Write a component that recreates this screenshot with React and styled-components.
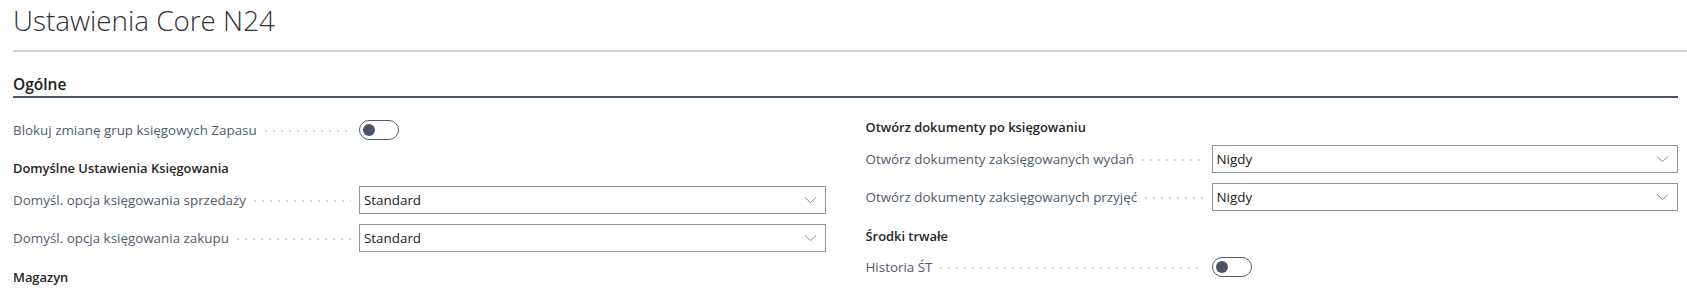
import React from "react";
import styled, { createGlobalStyle } from "styled-components";

const GlobalStyle = createGlobalStyle`
  body {
    margin: 0;
    background: #ffffff;
    font-family: "Open Sans", "Noto Sans", sans-serif;
  }
`;

const Page = styled.div`
  padding-left: 13px;
  width: 1687px;
  box-sizing: border-box;
`;

const Header = styled.header`
  height: 50px;
  border-bottom: 2px solid #d1d5da;
  box-sizing: content-box;
`;

const Title = styled.h1`
  margin: 0;
  padding-top: 2px;
  font-size: 27.8px;
  font-weight: 300;
  color: #333333;
  line-height: 36px;
`;

const Content = styled.div`
  padding-right: 9px;
`;

const Section = styled.section``;

const SectionTitle = styled.h2`
  margin: 0;
  padding-top: 21px;
  height: 23px;
  line-height: 23px;
  font-size: 15.5px;
  font-weight: 600;
  color: #212121;
  border-bottom: 2px solid #4b5568;
  box-sizing: content-box;
`;

const Columns = styled.div`
  display: grid;
  grid-template-columns: 1fr 1fr;
  column-gap: 40px;
  padding-top: 14px;
`;

const Column = styled.div`
  display: flex;
  flex-direction: column;
`;

const Group = styled.div`
  padding: 10px 0 3px;
  line-height: 20px;
  font-size: 12.9px;
  font-weight: 600;
  color: #262626;

  &:first-child {
    padding-top: 5px;
  }
`;

const Row = styled.div`
  display: flex;
  align-items: center;
  height: ${({ $short }) => ($short ? "36px" : "38px")};
`;

const Label = styled.div`
  flex: 0 0 346px;
  display: flex;
  align-items: center;
  gap: 8px;
  padding-right: 8px;
  box-sizing: border-box;
  font-size: 13.4px;
  color: #505c6d;
  white-space: nowrap;
`;

const Leader = styled.span`
  flex: 1;
  height: 2px;
  margin-top: 2px;
  background-image: linear-gradient(to right, #d6d8db 2px, transparent 2px);
  background-size: 8px 2px;
  background-repeat: repeat-x;
`;

const Select = styled.div`
  flex: 1;
  height: 28px;
  display: flex;
  align-items: center;
  justify-content: space-between;
  padding: 0 8px 0 4px;
  border: 1px solid #8c95a1;
  box-sizing: border-box;
  font-size: 13.4px;
  color: #212121;
`;

const Toggle = styled.div`
  width: 40px;
  height: 20px;
  border: 1px solid #505c6d;
  border-radius: 10px;
  box-sizing: border-box;
  display: flex;
  align-items: center;
  padding-left: 3px;
`;

const Knob = styled.span`
  width: 12px;
  height: 12px;
  border-radius: 50%;
  background: #4b5466;
`;

function Chevron() {
  return (
    <svg width="13" height="8" viewBox="0 0 13 8">
      <path d="M1 1.5 L6.5 6.5 L12 1.5" fill="none" stroke="#8a8f98" strokeWidth="1" />
    </svg>
  );
}

function Field({ label, children, short }) {
  return (
    <Row $short={short}>
      <Label>
        {label}
        <Leader />
      </Label>
      {children}
    </Row>
  );
}

function SelectField({ label, value }) {
  return (
    <Field label={label}>
      <Select>
        {value}
        <Chevron />
      </Select>
    </Field>
  );
}

function ToggleField({ label }) {
  return (
    <Field label={label} short>
      <Toggle>
        <Knob />
      </Toggle>
    </Field>
  );
}

export default function App() {
  return (
    <Page>
      <GlobalStyle />
      <Header>
        <Title>Ustawienia Core N24</Title>
      </Header>
      <Content>
        <Section>
          <SectionTitle>Ogólne</SectionTitle>
          <Columns>
            <Column>
              <ToggleField label="Blokuj zmianę grup księgowych Zapasu" />
              <Group>Domyślne Ustawienia Księgowania</Group>
              <SelectField label="Domyśl. opcja księgowania sprzedaży" value="Standard" />
              <SelectField label="Domyśl. opcja księgowania zakupu" value="Standard" />
              <Group>Magazyn</Group>
            </Column>
            <Column>
              <Group>Otwórz dokumenty po księgowaniu</Group>
              <SelectField label="Otwórz dokumenty zaksięgowanych wydań" value="Nigdy" />
              <SelectField label="Otwórz dokumenty zaksięgowanych przyjęć" value="Nigdy" />
              <Group>Środki trwałe</Group>
              <ToggleField label="Historia ŚT" />
            </Column>
          </Columns>
        </Section>
      </Content>
    </Page>
  );
}
